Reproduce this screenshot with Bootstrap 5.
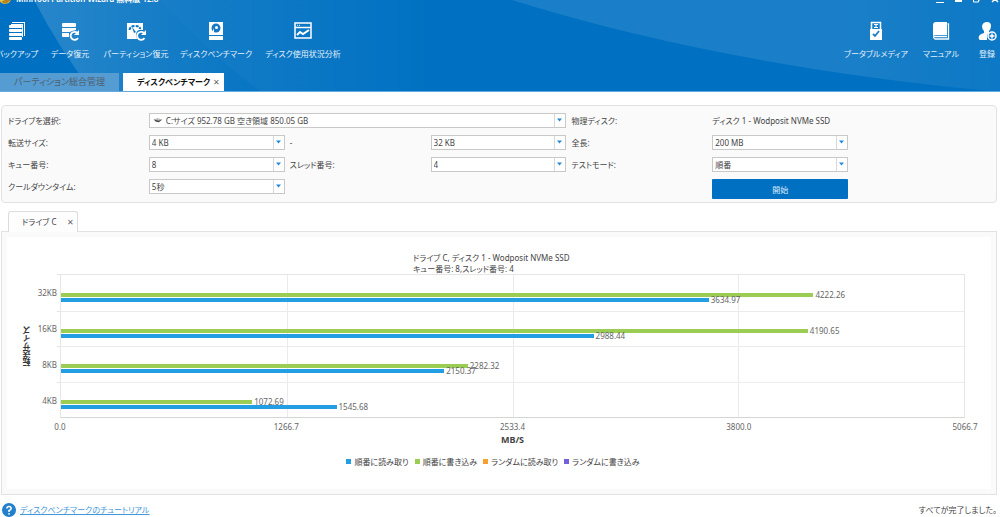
<!DOCTYPE html>
<html lang="ja">
<head>
<meta charset="utf-8">
<meta name="viewport" content="width=device-width, initial-scale=1">
<title>MiniTool Partition Wizard</title>
<link href="https://cdn.jsdelivr.net/npm/bootstrap@5.3.0/dist/css/bootstrap.min.css" rel="stylesheet">
<style>
body{font-family:"Noto Sans","Noto Sans CJK JP",sans-serif;font-size:8px;line-height:12px;color:#444;font-feature-settings:"palt";background:#fff}
button,select{font:inherit;font-feature-settings:inherit;color:inherit}
.app-head{background:#0071c2;color:#fff;overflow:hidden;border-bottom:1px solid #62abe0}
.app-head .backdrop{position:absolute;inset:0;width:100%;height:100%}
.title-row{height:12px;margin-top:-7px;white-space:nowrap}
.tool-row{height:68px;padding-top:16px}
.tool{background:none;border:0;padding:0;color:#e4f0fa;white-space:nowrap;display:flex;flex-direction:column;align-items:center;gap:7px}
.tool svg{width:20px;height:20px;display:block;flex:none}
.tools-main{display:grid;grid-template-columns:36px 38px 62px 66px 76px;column-gap:16px;margin-left:-1px}
.tools-side{display:grid;grid-template-columns:58px 36px 20px;column-gap:18px;padding-right:3px}
.page-tab{border:0;padding:0 4px 0 14px;height:18px;border-radius:0;white-space:nowrap}
.page-tab.idle{background:#559cd3;color:#50606e;width:119px;padding:0;font-size:9px}
.page-tab.current{background:#fff;color:#111;font-weight:600;width:101px}
.close-x{color:#666;font-weight:400}
.panel{background:#fafafa;border:1px solid #e2e2e2}
.form-panel{margin:13px 3px 0 1px;border-radius:4px;padding:7px 7px 3px 6px}
.form-rows{display:grid;grid-template-columns:repeat(7,1fr);column-gap:5px;row-gap:7px;align-items:start;line-height:15px;white-space:nowrap}
.combo{appearance:none;display:block;width:100%;height:15px;padding:0 14px 0 2px;border:1px solid #c8c8c8;border-radius:0;line-height:12px;
background:#fff url("data:image/svg+xml,%3Csvg xmlns='http://www.w3.org/2000/svg' width='11' height='15'%3E%3Cpath d='M.5 0v15' stroke='%23d8d8d8'/%3E%3Cpath d='M3 5.500h5l-2.500 3z' fill='%232487d8'/%3E%3C/svg%3E") no-repeat right center}
.drive-box{grid-column:2/5;position:relative}
.drive-box .combo{padding-left:16px}
.drive-box svg{position:absolute;left:4px;top:5px;width:10px;height:5px}
.start-btn{background:#0071c2;color:#d8eafa;border:0;border-radius:1px;height:20px;width:100%;padding:0;grid-column:6}
.result-tab{margin:8px 0 -1px 8px;width:70px;height:21px;border:1px solid #dcdcdc;border-bottom:0;border-radius:3px 3px 0 0;background:#fdfdfd;position:relative;padding:0 3px 0 13px}
.result-panel{margin:0 3px 0 1px;padding:5px}
.chart{background:#fff;padding:15px 26px 21px 14px}
.chart-title{line-height:11px;width:160px;margin:0 auto}
.y-title{writing-mode:vertical-rl;transform:rotate(180deg);font-weight:700;color:#333;width:13px}
.y-labels{display:grid;grid-template-rows:repeat(4,1fr);width:26px;text-align:right;padding:0 3px 0 0;color:#666}
.y-labels span{padding-top:13px}
.plot{height:144px;position:relative;border:1px solid #e6e6e6;border-bottom-color:#d5d5d5;display:grid;grid-template-rows:repeat(4,1fr)}
.v-lines{position:absolute;inset:0;display:grid;grid-template-columns:repeat(4,1fr)}
.v-lines i+i{border-left:1px solid #ebebeb}
.band{position:relative;padding-top:18px;color:#666}
.band::before{content:"";position:absolute;left:-4px;top:-1px;width:3px;border-top:1px solid #e2e2e2}
.band+.band{border-top:1px solid #ececec;padding-top:17px}
.bar-line{display:flex;align-items:center;height:4px;margin-bottom:1px;line-height:10px}
.bar-line b{height:4px;margin-right:2px;flex:none}
.wr b{background:#9bcd54}.rd b{background:#249ee2}
.x-axis{padding-left:39px}
.x-labels{display:flex;justify-content:space-between;margin:3px -14px 0;color:#666}
.x-labels span{width:28px;text-align:center}
.x-unit{font-size:9px;margin-top:1px}
.legend-box{gap:6px;margin-top:10px}
.legend-box i{width:5px;height:5px;margin-right:3px;display:inline-block;vertical-align:1px}
.foot{padding:8px 3px 0 2px}
.foot a{color:#4296dd}
</style>
</head>
<body class="d-flex flex-column min-vh-100">
<header class="app-head position-relative">
<svg class="backdrop" viewBox="0 0 1000 91" preserveAspectRatio="none" aria-hidden="true">
<defs><linearGradient id="g1"><stop offset="0" stop-color="#fff" stop-opacity=".13"/><stop offset="1" stop-color="#fff" stop-opacity="0"/></linearGradient>
<linearGradient id="g2"><stop offset="0" stop-color="#fff" stop-opacity=".1"/><stop offset=".7" stop-color="#fff" stop-opacity=".1"/><stop offset="1" stop-color="#fff" stop-opacity=".05"/></linearGradient></defs>
<path d="M34 0Q60 50 92 91H260Q210 55 160 0z" fill="url(#g1)"/><path d="M34 0Q60 50 92 91H260Q210 55 160 0z" fill="#fff" fill-opacity=".03"/>
<path d="M160 0Q210 55 260 91H430V0z" fill="url(#g1)" fill-opacity=".7"/>
<path d="M512 0Q720 65 990 91H1000V0z" fill="url(#g2)"/>
</svg>
<div class="position-relative">
<div class="title-row d-flex justify-content-between">
<div class="d-flex"><svg width="12" height="12" viewBox="0 0 12 12"><circle cx="5" cy="5" r="6" fill="#efc74a"/><path d="M1 9 8 5l3 2-5 4z" fill="#b98522"/></svg><span class="ms-1 fw-semibold">MiniTool Partition Wizard 無料版 12.8</span></div>
<svg width="66" height="12" viewBox="0 0 66 12" fill="none" stroke="#fff"><path d="M2 9.500h8"/><path d="M21 8h7" stroke-width="2"/><path d="M39.500 4v5h5v-5M44 7h2"/><path d="m58 3 3 2 3-2M58 9l3-3 3 3" stroke-width="1.500"/></svg>
</div>
<div class="tool-row d-flex justify-content-between">
<nav class="tools-main">
<button class="tool"><svg viewBox="0 0 20 20" fill="#fff"><path d="M5 1h13v14h-1V2H5zM4 3h12v13h-1V4H4z"/><rect x="2" y="4" width="13" height="3" rx="1"/><rect x="2" y="8" width="13" height="3" rx="1"/><rect x="2" y="12" width="13" height="3" rx="1"/><rect x="2" y="16" width="13" height="3" rx="1"/></svg><span>バックアップ</span></button>
<button class="tool"><svg viewBox="0 0 20 20" fill="#fff"><rect x="2" y="2" width="14" height="4" rx="1"/><path d="M2 7h14v2l-4 1-2 1H2zM2 12h7v4H3q-1 0-1-1z"/><path d="M17.500 12A4 4 0 1 0 18 17" fill="none" stroke="#fff" stroke-width="1.800"/><path d="M19 9v5h-5z"/></svg><span>データ復元</span></button>
<button class="tool"><svg viewBox="0 0 20 20"><path d="M1 2h16v7q-7-1-7 5l1 4H1z" fill="#fff"/><path d="M3.500 9Q4 5 9 5t5 3" fill="none" stroke="#0d75c4" stroke-width="2" stroke-dasharray="3 1"/><path d="m6 6 4 5-2 1z" fill="#0d75c4"/><path d="M18 12A4 4 0 1 0 18.500 17" fill="none" stroke="#fff" stroke-width="1.800"/><path d="M20 9v5h-5z" fill="#fff"/></svg><span>パーティション復元</span></button>
<button class="tool"><svg viewBox="0 0 20 20"><path d="M3 1h14v13H3zM3 15h14v4H3z" fill="#fff"/><circle cx="10" cy="7" r="4.500" fill="#1878c6"/><circle cx="10.500" cy="6.500" r="1.500" fill="#fff"/><path d="M8 7v5H6z" fill="#fff"/></svg><span>ディスクベンチマーク</span></button>
<button class="tool"><svg viewBox="0 0 20 20"><path d="M2 2h16v15H2z" fill="none" stroke="#fff" stroke-width="1.500"/><path d="M2 6.500h16" stroke="#fff" stroke-width="1.500"/><path d="M4 4.300h1m1 0h1" stroke="#fff"/><path d="m4 14 3-3 3 2 6-4" fill="none" stroke="#fff" stroke-width="2"/></svg><span>ディスク使用状況分析</span></button>
</nav>
<nav class="tools-side">
<button class="tool"><svg viewBox="0 0 20 20"><path d="M5.500 8V1.500h9V8" fill="none" stroke="#fff" stroke-width="1.500"/><path d="M8 3h4v1H8zM8 6h4v1H8zM9.500 3h1v4h-1zM4 8h12v11H4z" fill="#fff"/><path d="m7 13 2 2 4-5" fill="none" stroke="#1b7dc8" stroke-width="1.800"/></svg><span>ブータブルメディア</span></button>
<button class="tool"><svg viewBox="0 0 20 20"><path d="M5 1h11v13H5q-3 0-3 2V4q0-3 3-3z" fill="#fff"/><path d="M16.500 3h1v15H4q-2-1-1-2.500h13" fill="none" stroke="#fff" stroke-width="1.300"/></svg><span>マニュアル</span></button>
<button class="tool"><svg viewBox="0 0 20 20"><path d="M10 1q4 0 4 4 0 3-2 5v2l-2 2v5H3q-2-1-1-4 1-2 5-3v-2Q5 8 5 5q1-4 5-4z" fill="#fff"/><circle cx="15" cy="15" r="4" fill="#1b7dc8" stroke="#fff" stroke-width="1.500"/><path d="M12.500 15h5M15 12.500v5" stroke="#fff" stroke-width="1.500"/></svg><span>登録</span></button>
</nav>
</div>
<div class="d-flex gap-1"><button class="page-tab idle">パーティション総合管理</button><button class="page-tab current d-flex justify-content-between align-items-center"><span>ディスクベンチマーク</span><span class="close-x">✕</span></button></div>
</div>
</header>
<main>
<form class="panel form-panel">
<div class="form-rows">
<label for="drive">ドライブを選択:</label><div class="drive-box"><select class="combo" id="drive"><option>C:サイズ 952.78 GB 空き領域 850.05 GB</option></select><svg viewBox="0 0 12 7"><path d="m0 2 5-2 7 2-5 4-4-1z" fill="#b9bcb9"/><path d="m0 2 7 2 5-2-5 4-4-1z" fill="#3d443f"/></svg></div><span>物理ディスク:</span><span>ディスク 1 - Wodposit NVMe SSD</span><span></span>
<label for="from">転送サイズ:</label><select class="combo" id="from"><option>4 KB</option></select><label for="to">-</label><select class="combo" id="to"><option>32 KB</option></select><label for="total">全長:</label><select class="combo" id="total"><option>200 MB</option></select><span></span>
<label for="queue">キュー番号:</label><select class="combo" id="queue"><option>8</option></select><label for="thread">スレッド番号:</label><select class="combo" id="thread"><option>4</option></select><label for="mode">テストモード:</label><select class="combo" id="mode"><option>順番</option></select><span></span>
<label for="cool">クールダウンタイム:</label><select class="combo" id="cool"><option>5秒</option></select><button type="button" class="start-btn">開始</button>
</div>
</form>
<div class="result-tab d-flex justify-content-between align-items-center"><span>ドライブ C</span><span class="close-x">✕</span></div>
<section class="panel result-panel">
<div class="chart">
<div class="chart-title text-nowrap">ドライブ C, ディスク 1 - Wodposit NVMe SSD<br>キュー番号: 8,スレッド番号: 4</div>
<div class="d-flex">
<div class="y-title text-center">転送サイズ</div>
<div class="y-labels"><span>32KB</span><span>16KB</span><span>8KB</span><span>4KB</span></div>
<div class="plot flex-grow-1"><div class="v-lines"><i></i><i></i><i></i><i></i></div>
<div class="band"><div class="bar-line wr"><b style="width:83.33%"></b>4222.26</div><div class="bar-line rd"><b style="width:71.74%"></b>3634.97</div></div>
<div class="band"><div class="bar-line wr"><b style="width:82.71%"></b>4190.65</div><div class="bar-line rd"><b style="width:58.98%"></b>2988.44</div></div>
<div class="band"><div class="bar-line wr"><b style="width:45.05%"></b>2282.32</div><div class="bar-line rd"><b style="width:42.44%"></b>2150.37</div></div>
<div class="band"><div class="bar-line wr"><b style="width:21.17%"></b>1072.69</div><div class="bar-line rd"><b style="width:30.51%"></b>1545.68</div></div>
</div>
</div>
<div class="x-axis"><div class="x-labels"><span>0.0</span><span>1266.7</span><span>2533.4</span><span>3800.0</span><span>5066.7</span></div><div class="x-unit text-center fw-bold">MB/S</div></div>
<div class="legend-box d-flex justify-content-center"><span><i style="background:#249ee2"></i>順番に読み取り</span><span><i style="background:#9bcd54"></i>順番に書き込み</span><span><i style="background:#f6a131"></i>ランダムに読み取り</span><span><i style="background:#7460d8"></i>ランダムに書き込み</span></div>
</div>
</section>
</main>
<footer class="foot d-flex justify-content-between align-items-center"><div class="d-flex align-items-center gap-1"><svg width="14" height="14" viewBox="0 0 14 14"><circle cx="7" cy="7" r="7" fill="#2380cc"/><path d="M4.800 5.500Q5 3.500 7 3.500T9.200 5.500Q9 7 7 7.500V9" fill="none" stroke="#fff" stroke-width="1.500"/><circle cx="7" cy="10.800" r=".9" fill="#fff"/></svg><a href="#">ディスクベンチマークのチュートリアル</a></div><span>すべてが完了しました。</span></footer>
<script src="https://cdn.jsdelivr.net/npm/bootstrap@5.3.0/dist/js/bootstrap.bundle.min.js"></script>
</body>
</html>
